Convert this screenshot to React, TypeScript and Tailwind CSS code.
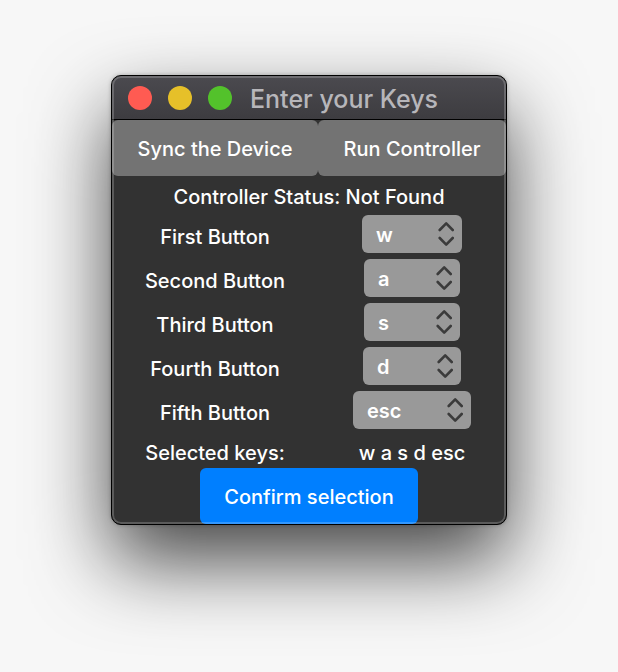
import { useState } from "react";

const KEY_OPTIONS = ["w", "a", "s", "d", "esc"];

const ROWS = [
  { id: "first", label: "First Button", value: "w", width: "w-[100px]" },
  { id: "second", label: "Second Button", value: "a", width: "w-[96px]" },
  { id: "third", label: "Third Button", value: "s", width: "w-[96px]" },
  { id: "fourth", label: "Fourth Button", value: "d", width: "w-[98px]" },
  { id: "fifth", label: "Fifth Button", value: "esc", width: "w-[118px]" },
];

function TitleBar() {
  return (
    <header className="flex h-11 items-center gap-[18px] border-b border-black bg-linear-to-b from-[#4b4a4f] to-[#3d3c40] px-4">
      <div className="flex gap-4">
        <button aria-label="Close" className="size-6 rounded-full bg-[#ff5b52]" />
        <button aria-label="Minimize" className="size-6 rounded-full bg-[#e6c029]" />
        <button aria-label="Zoom" className="size-6 rounded-full bg-[#53c22b]" />
      </div>
      <h1 className="pt-0.5 text-[25px] leading-8 whitespace-nowrap text-[#b7b6ba]">Enter your Keys</h1>
    </header>
  );
}

function Chevrons() {
  return (
    <svg
      className="pointer-events-none absolute inset-y-0 right-2 h-full w-4"
      viewBox="0 0 16 38"
      fill="none"
      stroke="#3b3b3b"
      strokeWidth="2.6"
      strokeLinecap="round"
      strokeLinejoin="round"
      aria-hidden="true"
    >
      <path d="M1.7 15 8.2 8.4 14.7 15" />
      <path d="M1.7 23 8.2 29.6 14.7 23" />
    </svg>
  );
}

export default function App() {
  const [keys, setKeys] = useState(ROWS.map((row) => row.value));

  const setKey = (index: number, value: string) =>
    setKeys(keys.map((key, i) => (i === index ? value : key)));

  return (
    <main className="flex min-h-screen items-start justify-center bg-[#f7f7f7] px-4 pt-[75px] pb-16 font-['Inter','Liberation_Sans',sans-serif] text-[20px] leading-6 font-medium text-white">
      <section className="relative w-full max-w-[396px] overflow-hidden rounded-[10px] border border-black bg-[#323232] shadow-[0_36px_80px_rgba(0,0,0,0.72),0_0_4px_rgba(0,0,0,0.25)] after:pointer-events-none after:absolute after:inset-0 after:rounded-[9px] after:inset-ring-2 after:inset-ring-white/20">
        <TitleBar />
        <div className="grid grid-cols-[206fr_188fr]">
          <button className="h-14 rounded-md bg-[#737373] pt-0.5">Sync the Device</button>
          <button className="h-14 rounded-md bg-[#737373] pt-0.5">Run Controller</button>
        </div>
        <p className="flex h-9 items-center justify-center pt-1.5">Controller Status: Not Found</p>
        {ROWS.map((row, index) => (
          <div key={row.id} className="grid h-11 grid-cols-[206fr_188fr] items-center justify-items-center">
            <label htmlFor={row.id} className="pt-1.5">
              {row.label}
            </label>
            <div className={`relative ${row.width}`}>
              <select
                id={row.id}
                value={keys[index]}
                onChange={(event) => setKey(index, event.target.value)}
                className="block h-[38px] w-full appearance-none rounded-md bg-[#999999] pt-0.5 pl-3.5 font-semibold"
              >
                {KEY_OPTIONS.map((key) => (
                  <option key={key}>{key}</option>
                ))}
              </select>
              <Chevrons />
            </div>
          </div>
        ))}
        <div className="grid h-9 grid-cols-[206fr_188fr] items-center justify-items-center pt-1.5">
          <span>Selected keys:</span>
          <output>{keys.join(" ")}</output>
        </div>
        <div className="flex justify-center">
          <button className="h-14 rounded-md bg-[#007fff] px-6 pt-0.5">Confirm selection</button>
        </div>
      </section>
    </main>
  );
}
